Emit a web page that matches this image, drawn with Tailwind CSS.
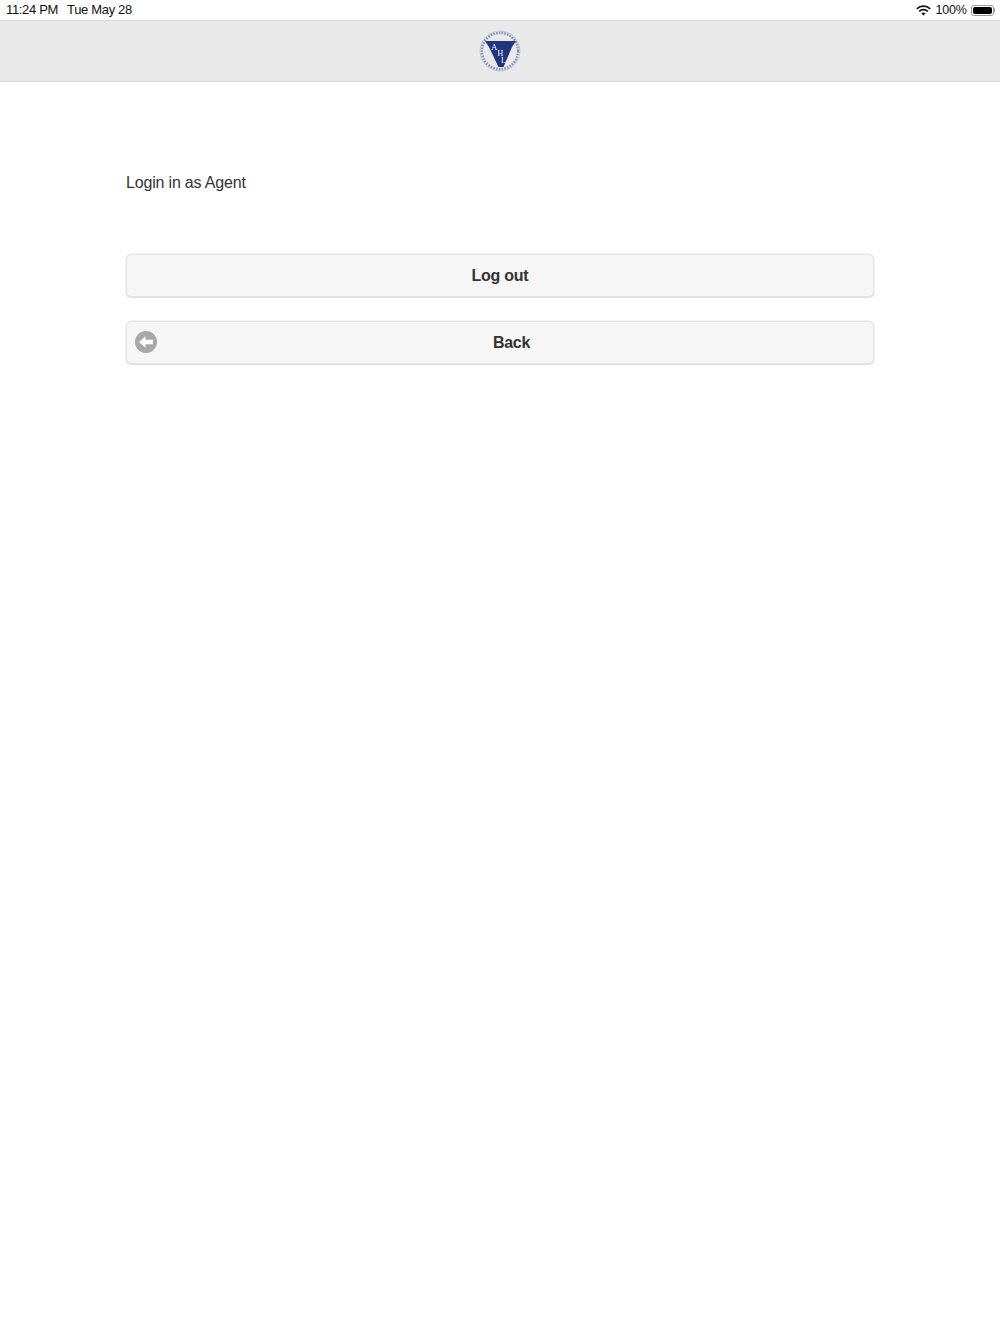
<!DOCTYPE html>
<html lang="en">
  <head>
    <meta charset="UTF-8" />
    <meta name="viewport" content="width=device-width, initial-scale=1.0" />
    <title>Login in as Agent</title>
    <script src="https://cdn.jsdelivr.net/npm/@tailwindcss/browser@4"></script>
  </head>
  <body class="bg-white text-[#333] font-['Liberation_Sans',Arial,sans-serif]">
    <div class="h-[1334px] w-[1000px] overflow-hidden">
      <!-- Status bar -->
      <div class="flex h-[20px] items-center justify-between pl-[6px] pr-[5px] text-[13px] tracking-[-0.33px] text-[#111]">
        <div class="flex gap-[9px]">
          <span>11:24 PM</span>
          <span>Tue May 28</span>
        </div>
        <div class="flex items-center gap-[5px]">
          <svg width="15" height="11" viewBox="0 0 15 11" fill="none" stroke="#111" stroke-width="1.7">
            <path d="M0.8 3.9a9.6 9.6 0 0 1 13.4 0" />
            <path d="M3.2 6.3a6.2 6.2 0 0 1 8.6 0" />
            <path d="M7.5 10.6 5.4 8.5a3 3 0 0 1 4.2 0z" fill="#111" stroke="none" />
          </svg>
          <span class="w-[30px] text-[12.5px] tracking-[-0.2px]">100%</span>
          <div class="flex items-center">
            <div class="flex h-[11px] w-[23px] items-center rounded-[3px] border border-[#999] p-px">
              <div class="h-full w-full rounded-[2px] bg-black"></div>
            </div>
            <div class="h-[4px] w-[1.5px] rounded-r-sm bg-[#999]"></div>
          </div>
        </div>
      </div>

      <!-- Header -->
      <header class="flex h-[62px] items-center justify-center border-y border-[#d9d9d9] bg-[#e9e9e9]">
        <svg class="blur-[0.4px]" width="42" height="42" viewBox="0 0 42 42">
          <circle cx="21" cy="21" r="18.2" fill="none" stroke="#8791bb" stroke-width="2.6" stroke-dasharray="1.6 1.2" />
          <circle cx="21" cy="21" r="20" fill="none" stroke="#a9b0cc" stroke-width="0.6" />
          <path d="M6 11H37L33 17 24.5 37H19.5L10 17Z" fill="#1f3580" />
          <text x="12" y="19.5" font-size="9" fill="#fff" font-family="Liberation Serif, serif">A</text>
          <text x="18.5" y="26" font-size="8" fill="#fff" font-family="Liberation Serif, serif">H</text>
          <text x="22" y="33" font-size="8" fill="#fff" font-family="Liberation Serif, serif">L</text>
        </svg>
      </header>

      <!-- Content -->
      <main class="px-[126px]">
        <p class="mt-[91px] text-[16px] leading-[20px] tracking-[-0.18px]">Login in as Agent</p>

        <button type="button" class="mt-[61px] flex h-[43px] w-full items-center justify-center rounded-[5px] border border-[#e3e3e3] bg-[#f6f6f6] text-[16px] font-bold tracking-[-0.25px] text-[#333] shadow-[0_0_1px_1px_rgba(0,0,0,0.04),0_1px_1px_rgba(0,0,0,0.1)]">
          Log out
        </button>

        <button type="button" class="relative mt-[24px] flex h-[43px] w-full items-center justify-center rounded-[5px] border border-[#e3e3e3] bg-[#f6f6f6] pl-[23px] text-[16px] font-bold tracking-[-0.25px] text-[#333] shadow-[0_0_1px_1px_rgba(0,0,0,0.04),0_1px_1px_rgba(0,0,0,0.1)]">
          <svg class="absolute left-[8px] top-[9px]" width="22" height="22" viewBox="0 0 22 22">
            <circle cx="11" cy="11" r="11" fill="#a8a8a8" />
            <path d="M4 11 10.5 5.2V8.8H18V13.2H10.5V16.8Z" fill="#fff" />
          </svg>
          Back
        </button>
      </main>
    </div>
  </body>
</html>
